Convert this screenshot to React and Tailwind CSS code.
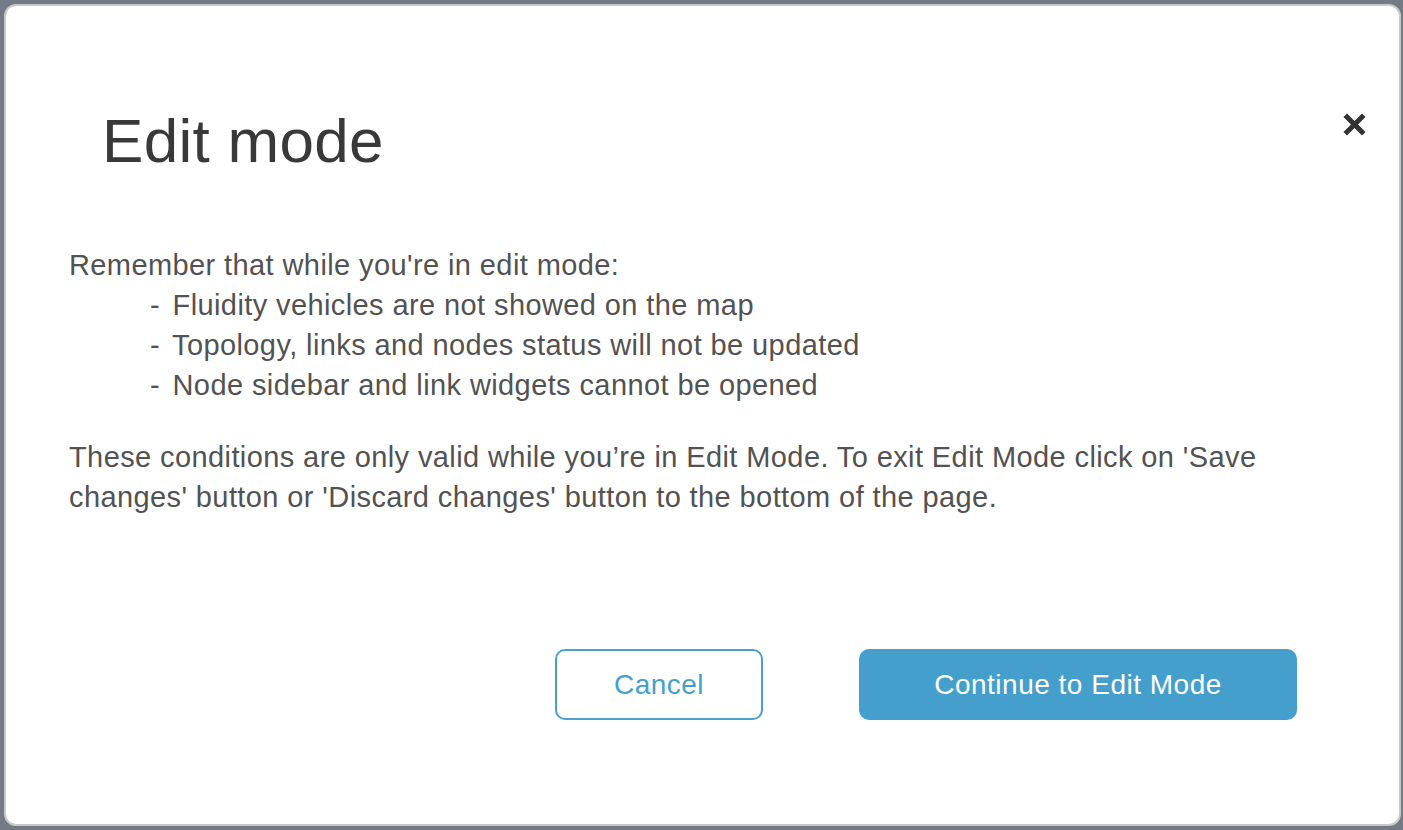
export default function App() {
  return (
    <div
      className="w-[1403px] h-[830px] bg-[#737b86] pt-[4px] pl-[4px] pr-[2px] pb-[4px]"
      style={{ fontFamily: '"Liberation Sans", Arial, sans-serif' }}
    >
      <div className="relative h-full w-full bg-white rounded-[12px] border-2 border-[#c9c9c9] flex flex-col">
        <button className="absolute right-[33px] top-[107px] text-[#333333]" aria-label="close">
          <svg width="23" height="23" viewBox="0 0 23 23">
            <path d="M4 4 L19 19 M19 4 L4 19" stroke="#333333" strokeWidth="5" strokeLinecap="square" />
          </svg>
        </button>
        <h1 className="pl-[96px] pt-[104px] text-[62px] leading-[62px] text-[#393939] font-normal tracking-[0.3px]">Edit mode</h1>
        <div className="pl-[63px] pr-[60px] pt-[73px] text-[29px] leading-[40px] tracking-[0.4px] text-[#525252]">
          <p>Remember that while you're in edit mode:</p>
          <p className="pl-[81px]"><span className="mr-[4px]">-</span> Fluidity vehicles are not showed on the map</p>
          <p className="pl-[81px]"><span className="mr-[4px]">-</span> Topology, links and nodes status will not be updated</p>
          <p className="pl-[81px]"><span className="mr-[4px]">-</span> Node sidebar and link widgets cannot be opened</p>
          <p className="mt-[32px]">
            These conditions are only valid while you’re in Edit Mode. To exit Edit Mode click on 'Save changes' button or 'Discard changes' button to the bottom of the page.
          </p>
        </div>
        <div className="mt-auto mb-[104px] flex justify-end gap-[96px] pr-[102px]">
          <button className="w-[208px] h-[71px] rounded-[10px] border-2 border-[#4a9fcf] text-[#449fcd] text-[28px] tracking-[0.5px] bg-white">
            Cancel
          </button>
          <button className="w-[438px] h-[71px] rounded-[10px] bg-[#449fcd] text-white text-[28px] tracking-[0.5px]">
            Continue to Edit Mode
          </button>
        </div>
      </div>
    </div>
  );
}
